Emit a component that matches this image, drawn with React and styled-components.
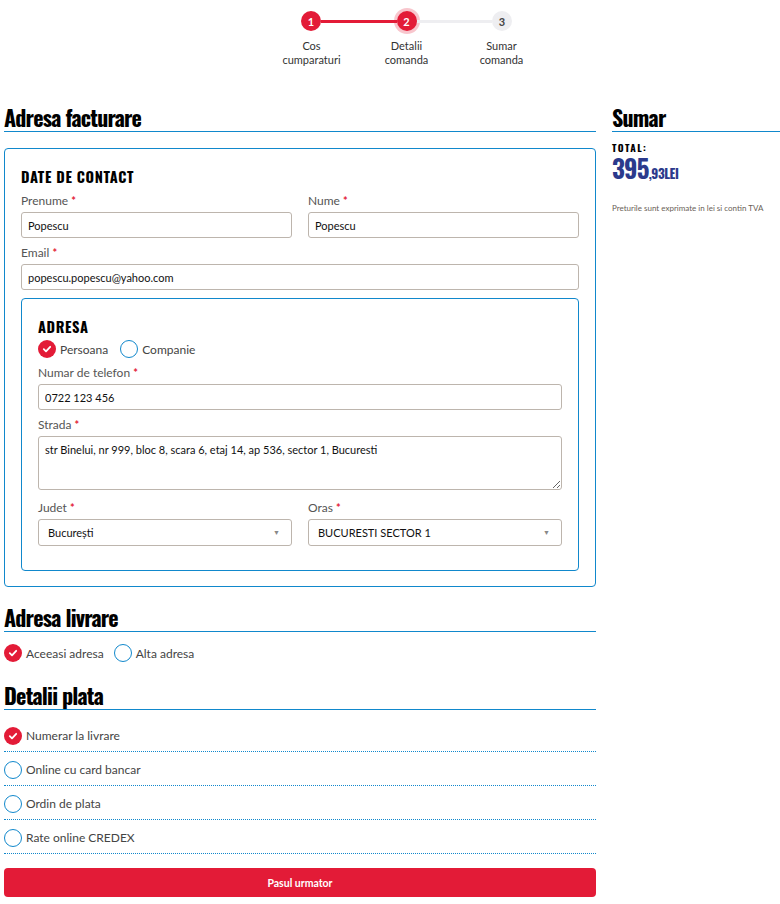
import React from "react";
import styled, { createGlobalStyle } from "styled-components";

const RED = "#e31b37";
const BLUE = "#1188cc";
const BODY_FONT = `"Lato", "Noto Sans", sans-serif`;
const HEAD_FONT = `"Oswald", "Liberation Sans Narrow", "DejaVu Sans Condensed", sans-serif`;

const GlobalStyle = createGlobalStyle`
  * { box-sizing: border-box; }
  body {
    margin: 0;
    background: #fff;
    font-family: ${BODY_FONT};
    color: #333;
  }
`;

const Page = styled.div`
  width: 780px;
  padding: 0 0 8px 4px;
`;

const Stepper = styled.div`
  width: 285px;
  margin-left: 260px;
  padding-top: 11px;
`;

const StepTrack = styled.div`
  display: flex;
  align-items: center;
  padding: 0 37px;
`;

const StepDot = styled.div`
  width: 20px;
  height: 20px;
  flex: none;
  border-radius: 50%;
  display: flex;
  align-items: center;
  justify-content: center;
  font-size: 11px;
  font-weight: 700;
  color: ${(p) => (p.$done ? "#fff" : "#444")};
  background: ${(p) => (p.$done ? RED : "#eeeef1")};
  box-shadow: ${(p) => (p.$current ? "0 0 0 3px rgba(227, 27, 55, 0.25)" : "none")};
`;

const StepLine = styled.div`
  flex: 1;
  height: 3px;
  background: ${(p) => (p.$done ? RED : "#eeeef1")};
`;

const StepLabels = styled.div`
  display: flex;
  margin-top: 8px;
`;

const StepLabel = styled.div`
  width: 95px;
  text-align: center;
  font-size: 11px;
  line-height: 14px;
  color: #333;
`;

const Layout = styled.div`
  display: flex;
  gap: 16px;
  margin-top: 38px;
`;

const Main = styled.div`
  width: 592px;
`;

const Side = styled.div`
  flex: 1;
`;

const Heading = styled.h2`
  margin: ${(p) => p.$top || 0}px 0 0;
  font-family: ${HEAD_FONT};
  font-weight: 700;
  font-size: 22px;
  line-height: 25px;
  letter-spacing: -0.8px;
  color: #000;
  padding-bottom: 1px;
  border-bottom: 1px solid ${BLUE};
`;

const Panel = styled.div`
  border: 1px solid ${BLUE};
  border-radius: 4px;
  padding: ${(p) => (p.$inner ? "20px 16px 24px" : "20px 16px 15px")};
  margin-top: ${(p) => (p.$inner ? "8px" : "16px")};
`;

const PanelTitle = styled.div`
  font-family: ${HEAD_FONT};
  font-weight: 700;
  font-size: 14.5px;
  letter-spacing: 0.6px;
  color: #000;
  line-height: 16px;
`;

const Row = styled.div`
  display: grid;
  grid-template-columns: 1fr 1fr;
  column-gap: 16px;
`;

const Field = styled.div`
  margin-top: ${(p) => p.$top ?? 8}px;
`;

const Label = styled.div`
  font-size: 12px;
  line-height: 14px;
  color: #555;
  margin-bottom: 4px;
  span {
    color: ${RED};
    font-weight: 700;
    font-size: 11px;
  }
`;

const inputBase = `
  width: 100%;
  border: 1px solid #bdb5ad;
  border-radius: 3px;
  padding: 0 6px;
  font-family: ${BODY_FONT};
  font-size: 11px;
  color: #111;
  background: #fff;
  outline: none;
`;

const Input = styled.input`
  ${inputBase}
  height: 26px;
  display: block;
`;

const Area = styled.textarea`
  ${inputBase}
  height: 54px;
  padding: 6px 6px;
  display: block;
  resize: vertical;
  line-height: 14px;
`;

const SelectWrap = styled.div`
  position: relative;
`;

const Select = styled.select`
  ${inputBase}
  height: 27px;
  appearance: none;
  -webkit-appearance: none;
  padding: 0 9px;
  display: block;
`;

const Caret = styled.span`
  position: absolute;
  right: 12px;
  top: 9px;
  font-size: 7px;
  color: #888;
  pointer-events: none;
`;

const Options = styled.div`
  display: flex;
  gap: ${(p) => p.$gap ?? 12}px;
  margin-top: ${(p) => p.$top ?? 0}px;
`;

const Option = styled.label`
  display: flex;
  align-items: center;
  gap: 4px;
  font-size: 12px;
  color: #444;
  cursor: pointer;
`;

const Dot = styled.span`
  width: 18px;
  height: 18px;
  border-radius: 50%;
  flex: none;
  display: flex;
  align-items: center;
  justify-content: center;
  background: ${(p) => (p.$on ? RED : "#fff")};
  border: ${(p) => (p.$on ? "none" : `1.5px solid ${BLUE}`)};
`;

const Radio = ({ on, children }) => (
  <Option>
    <Dot $on={on}>
      {on && (
        <svg width="10" height="10" viewBox="0 0 10 10">
          <path d="M1.8 5.2 L4 7.3 L8.2 2.8" fill="none" stroke="#fff" strokeWidth="1.8" strokeLinecap="round" strokeLinejoin="round" />
        </svg>
      )}
    </Dot>
    {children}
  </Option>
);

const PayList = styled.div`
  margin-top: 8px;
`;

const PayRow = styled.div`
  height: 34px;
  display: flex;
  align-items: center;
  border-bottom: 1px dotted ${BLUE};
  padding-top: 2px;
`;

const NextButton = styled.button`
  display: block;
  width: 100%;
  height: 29px;
  margin-top: 14px;
  border: none;
  border-radius: 4px;
  background: ${RED};
  color: #fff;
  font-family: ${BODY_FONT};
  font-size: 10.5px;
  font-weight: 700;
  cursor: pointer;
`;

const TotalLabel = styled.div`
  margin-top: 10px;
  font-family: ${HEAD_FONT};
  font-weight: 700;
  font-size: 10px;
  letter-spacing: 1.4px;
  color: #000;
  line-height: 12px;
`;

const Price = styled.div`
  margin-top: 1px;
  font-family: ${HEAD_FONT};
  font-weight: 700;
  color: #2b3a8c;
  font-size: 25px;
  line-height: 26px;
  letter-spacing: -0.8px;
  small {
    font-size: 13px;
    letter-spacing: -0.4px;
  }
`;

const Note = styled.div`
  margin-top: 17px;
  font-size: 8px;
  white-space: nowrap;
  color: #6a5f58;
`;

const Req = () => <span>*</span>;

export default function App() {
  return (
    <Page>
      <GlobalStyle />
      <Stepper>
        <StepTrack>
          <StepDot $done>1</StepDot>
          <StepLine $done />
          <StepDot $done $current>2</StepDot>
          <StepLine />
          <StepDot>3</StepDot>
        </StepTrack>
        <StepLabels>
          <StepLabel>Cos<br />cumparaturi</StepLabel>
          <StepLabel>Detalii<br />comanda</StepLabel>
          <StepLabel>Sumar<br />comanda</StepLabel>
        </StepLabels>
      </Stepper>

      <Layout>
        <Main>
          <Heading>Adresa facturare</Heading>
          <Panel>
            <PanelTitle>DATE DE CONTACT</PanelTitle>
            <Row>
              <Field $top={9}>
                <Label>Prenume <Req /></Label>
                <Input defaultValue="Popescu" />
              </Field>
              <Field $top={9}>
                <Label>Nume <Req /></Label>
                <Input defaultValue="Popescu" />
              </Field>
            </Row>
            <Field>
              <Label>Email <Req /></Label>
              <Input defaultValue="popescu.popescu@yahoo.com" />
            </Field>

            <Panel $inner>
              <PanelTitle>ADRESA</PanelTitle>
              <Options $top={5}>
                <Radio on>Persoana</Radio>
                <Radio>Companie</Radio>
              </Options>
              <Field>
                <Label>Numar de telefon <Req /></Label>
                <Input defaultValue="0722 123 456" />
              </Field>
              <Field>
                <Label>Strada <Req /></Label>
                <Area defaultValue="str Binelui, nr 999, bloc 8, scara 6, etaj 14, ap 536, sector 1, Bucuresti" />
              </Field>
              <Row>
                <Field $top={11}>
                  <Label>Judet <Req /></Label>
                  <SelectWrap>
                    <Select defaultValue="b">
                      <option value="b">București</option>
                    </Select>
                    <Caret>▼</Caret>
                  </SelectWrap>
                </Field>
                <Field $top={11}>
                  <Label>Oras <Req /></Label>
                  <SelectWrap>
                    <Select defaultValue="s1">
                      <option value="s1">BUCURESTI SECTOR 1</option>
                    </Select>
                    <Caret>▼</Caret>
                  </SelectWrap>
                </Field>
              </Row>
            </Panel>
          </Panel>

          <Heading $top={18}>Adresa livrare</Heading>
          <Options $top={12} $gap={10}>
            <Radio on>Aceeasi adresa</Radio>
            <Radio>Alta adresa</Radio>
          </Options>

          <Heading $top={21}>Detalii plata</Heading>
          <PayList>
            <PayRow><Radio on>Numerar la livrare</Radio></PayRow>
            <PayRow><Radio>Online cu card bancar</Radio></PayRow>
            <PayRow><Radio>Ordin de plata</Radio></PayRow>
            <PayRow><Radio>Rate online CREDEX</Radio></PayRow>
          </PayList>
          <NextButton>Pasul urmator</NextButton>
        </Main>

        <Side>
          <Heading>Sumar</Heading>
          <TotalLabel>TOTAL:</TotalLabel>
          <Price>395<small>,93LEI</small></Price>
          <Note>Preturile sunt exprimate in lei si contin TVA</Note>
        </Side>
      </Layout>
    </Page>
  );
}
